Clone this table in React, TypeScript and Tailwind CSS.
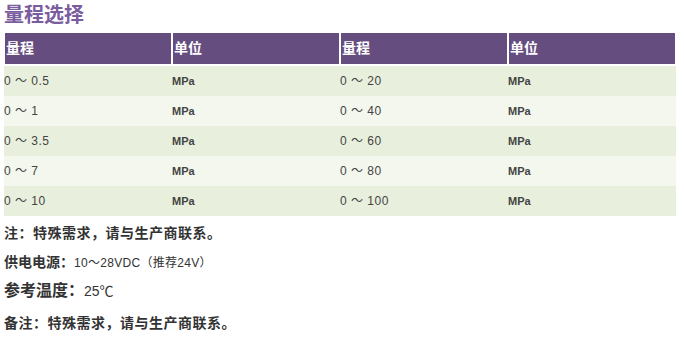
import React from "react";

const rows = [
  ["0 ～ 0.5", "MPa", "0 ～ 20", "MPa"],
  ["0 ～ 1", "MPa", "0 ～ 40", "MPa"],
  ["0 ～ 3.5", "MPa", "0 ～ 60", "MPa"],
  ["0 ～ 7", "MPa", "0 ～ 80", "MPa"],
  ["0 ～ 10", "MPa", "0 ～ 100", "MPa"],
];

export default function App() {
  const font = { fontFamily: '"Liberation Sans","Noto Sans CJK SC",sans-serif' };
  return (
    <div className="w-[684px] h-[337px] bg-white text-[#333333] overflow-hidden" style={font}>
      <div className="px-[4px] h-[32px] text-[20px] font-bold leading-[30px] text-[#7b5c9e]">量程选择</div>
      <div className="px-[4px]">
        <table className="w-[672px] border-separate border-spacing-0 table-fixed">
          <thead>
            <tr>
              {["量程", "单位", "量程", "单位"].map((h, i) => (
                <th
                  key={i}
                  className="w-[168px] h-[34px] bg-[#654d80] border border-white border-b-2 px-[1px] text-left text-[14px] font-bold text-white align-middle"
                >
                  {h}
                </th>
              ))}
            </tr>
          </thead>
          <tbody>
            {rows.map((r, ri) => (
              <tr key={ri} className={ri % 2 === 0 ? "bg-[#e8f0dd]" : "bg-[#f3f7ed]"}>
                {r.map((c, ci) => (
                  <td
                    key={ci}
                    className={
                      "h-[30px] p-0 align-middle text-[#444] " +
                      (ci % 2 === 1 ? "font-bold text-[11px]" : "text-[12px] tracking-[0.5px]")
                    }
                  >
                    {c}
                  </td>
                ))}
              </tr>
            ))}
          </tbody>
        </table>
      </div>
      <div className="px-[4px] flex flex-col">
        <p className="mt-[4px] leading-[26px] text-[14px] font-bold tracking-[0.5px] text-[#333]">
          注：特殊需求，请与生产商联系。
        </p>
        <p className="mt-[3px] leading-[26px] text-[#333]">
          <span className="text-[14px] font-bold">供电电源：</span>
          <span className="text-[12px] tracking-[0.3px]">10～28VDC（推荐24V）</span>
        </p>
        <p className="leading-[30px] text-[#333]">
          <span className="text-[16px] font-bold">参考温度：</span>
          <span className="text-[14px]">25℃</span>
        </p>
        <p className="mt-[4px] leading-[26px] text-[14px] font-bold tracking-[0.5px] text-[#333]">
          备注：特殊需求，请与生产商联系。
        </p>
      </div>
    </div>
  );
}
